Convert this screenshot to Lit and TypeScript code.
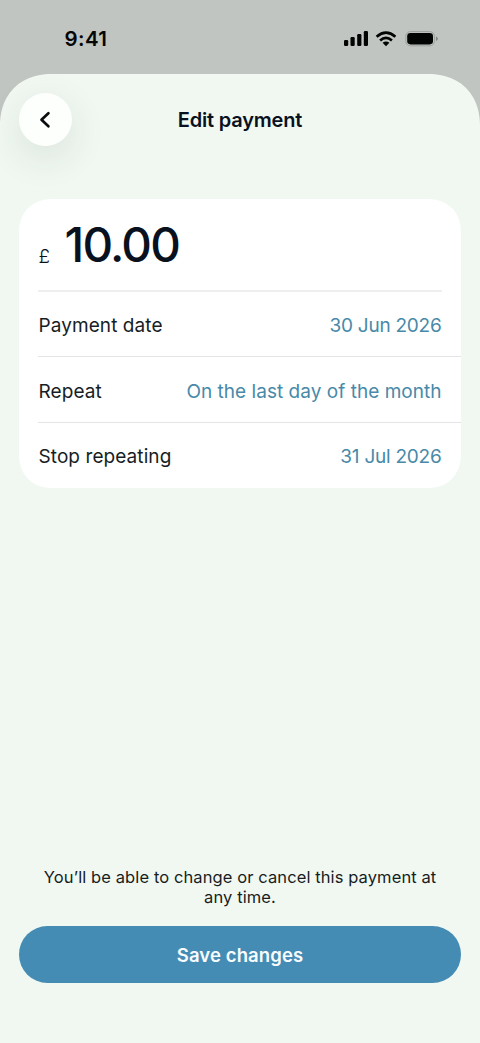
import { LitElement, html, css } from "lit";
import { customElement, property } from "lit/decorators.js";

@customElement("detail-row")
class DetailRow extends LitElement {
  @property() label = "";
  @property() value = "";

  static styles = css`
    :host { display: block; padding-left: 19px; }
    .row {
      display: flex; align-items: center; justify-content: space-between;
      height: 65.6px; box-sizing: border-box; padding: 3.4px 19.5px 0 0.5px;
      border-bottom: 1px solid #e3e5e6;
    }
    :host(:last-of-type) .row { border-bottom-color: transparent; }
    .label { color: #171d24; white-space: nowrap; letter-spacing: 0.08px; }
    .value { color: #4889a9; white-space: nowrap; letter-spacing: 0.03px; }
    :host([numeric]) .value { letter-spacing: -0.24px; }
  `;

  render() {
    return html`<div class="row">
      <span class="label">${this.label}</span>
      <span class="value">${this.value}</span>
    </div>`;
  }
}

@customElement("app-root")
class AppRoot extends LitElement {
  static styles = css`
    :host {
      display: flex; flex-direction: column; width: 480px; height: 1043px;
      background: #c1c5c1; overflow: hidden;
      font-family: Inter, "Liberation Sans", sans-serif; font-size: 19px;
      color: #09111e;
    }
    .status {
      height: 74px; box-sizing: border-box; padding: 27px 42px 0 64.5px;
      display: flex; justify-content: space-between; align-items: flex-start;
    }
    .time { font-size: 20.5px; line-height: 24px; font-weight: 600; color: #050707; letter-spacing: 0.4px; }
    .indicators { display: block; margin-top: 1px; }
    .sheet {
      flex: 1; display: flex; flex-direction: column; box-sizing: border-box;
      padding: 19px 19px 60px; background: #f1f8f2;
      border-radius: 52px 52px 0 0; corner-shape: superellipse(1.15);
    }
    .header { display: grid; grid-template-columns: 53px 1fr 53px; align-items: center; }
    .back {
      width: 53px; height: 53px; border: 0; padding: 0 2px 0 0; border-radius: 50%;
      background: #fdfffd; display: grid; place-items: center;
      box-shadow: 0 12px 38px rgba(40, 50, 45, 0.11);
    }
    h1 { margin: 0; text-align: center; font-size: 20px; line-height: 24px; font-weight: 600; letter-spacing: -0.2px; }
    .card {
      margin-top: 53px; height: 289px; background: #fefffe;
      border-radius: 34px; corner-shape: superellipse(1.15);
    }
    .amount {
      height: 92.5px; box-sizing: border-box; margin: 0 19px; padding-top: 12.5px;
      display: flex; align-items: baseline; border-bottom: 2px solid #eeeeef;
    }
    .currency { width: 26.5px; padding: 1px 0 0 0.5px; box-sizing: border-box; font-size: 19px; font-weight: 300; line-height: 24px; transform: translateY(1px); }
    .figure { font-size: 47.5px; line-height: 66px; font-weight: 500; letter-spacing: -1.8px; }
    .spacer { flex: 1; }
    .note {
      margin: 0 0 19px; text-align: center; font-size: 16.5px; line-height: 20px;
      letter-spacing: 0.1px; color: #171d22;
    }
    .save {
      height: 57px; border: 0; border-radius: 29px; background: #458cb4; color: #f7fcff;
      font: 600 18.5px/24px Inter, "Liberation Sans", sans-serif; letter-spacing: 0.1px;
    }
  `;

  render() {
    return html`
      <div class="status">
        <span class="time">9:41</span>
        <svg class="indicators" width="96" height="22" viewBox="342 28 96 22">
          <g fill="#020303">
            <rect x="344" y="40" width="4.2" height="6" rx="1.2" />
            <rect x="350.5" y="37" width="4.2" height="9" rx="1.2" />
            <rect x="357.2" y="34" width="4.2" height="12" rx="1.2" />
            <rect x="363.8" y="31" width="4.2" height="15" rx="1.2" />
            <path d="M386 46.2L382.6 42.8Q386 40.1 389.4 42.8Z" />
          </g>
          <g fill="none" stroke="#020303" stroke-width="2.7">
            <path d="M376.6 36.8Q386 28.6 395.4 36.8" />
            <path d="M380.1 40.4Q386 35.3 391.9 40.4" />
          </g>
          <rect x="405.8" y="31.6" width="28.6" height="14.2" rx="4.6" fill="none" stroke="#9da19d" />
          <rect x="407.2" y="33" width="25.8" height="11.4" rx="3.3" fill="#020303" />
          <path d="M436 36.5Q437.9 37.2 437.9 38.8T436 41Z" fill="#858985" />
        </svg>
      </div>
      <main class="sheet">
        <header class="header">
          <button class="back" aria-label="Back">
            <svg width="20" height="20" viewBox="0 0 20 20">
              <path d="M13.4 3.3L6.5 9.8L13.4 16.3" fill="none" stroke="#090d0f" stroke-width="2.7" stroke-linecap="round" stroke-linejoin="round" />
            </svg>
          </button>
          <h1>Edit payment</h1>
        </header>
        <section class="card">
          <div class="amount"><span class="currency">£</span><span class="figure">10.00</span></div>
          <detail-row label="Payment date" value="30 Jun 2026" numeric></detail-row>
          <detail-row label="Repeat" value="On the last day of the month"></detail-row>
          <detail-row label="Stop repeating" value="31 Jul 2026" numeric></detail-row>
        </section>
        <div class="spacer"></div>
        <p class="note">You’ll be able to change or cancel this payment at<br />any time.</p>
        <button class="save">Save changes</button>
      </main>
    `;
  }
}
